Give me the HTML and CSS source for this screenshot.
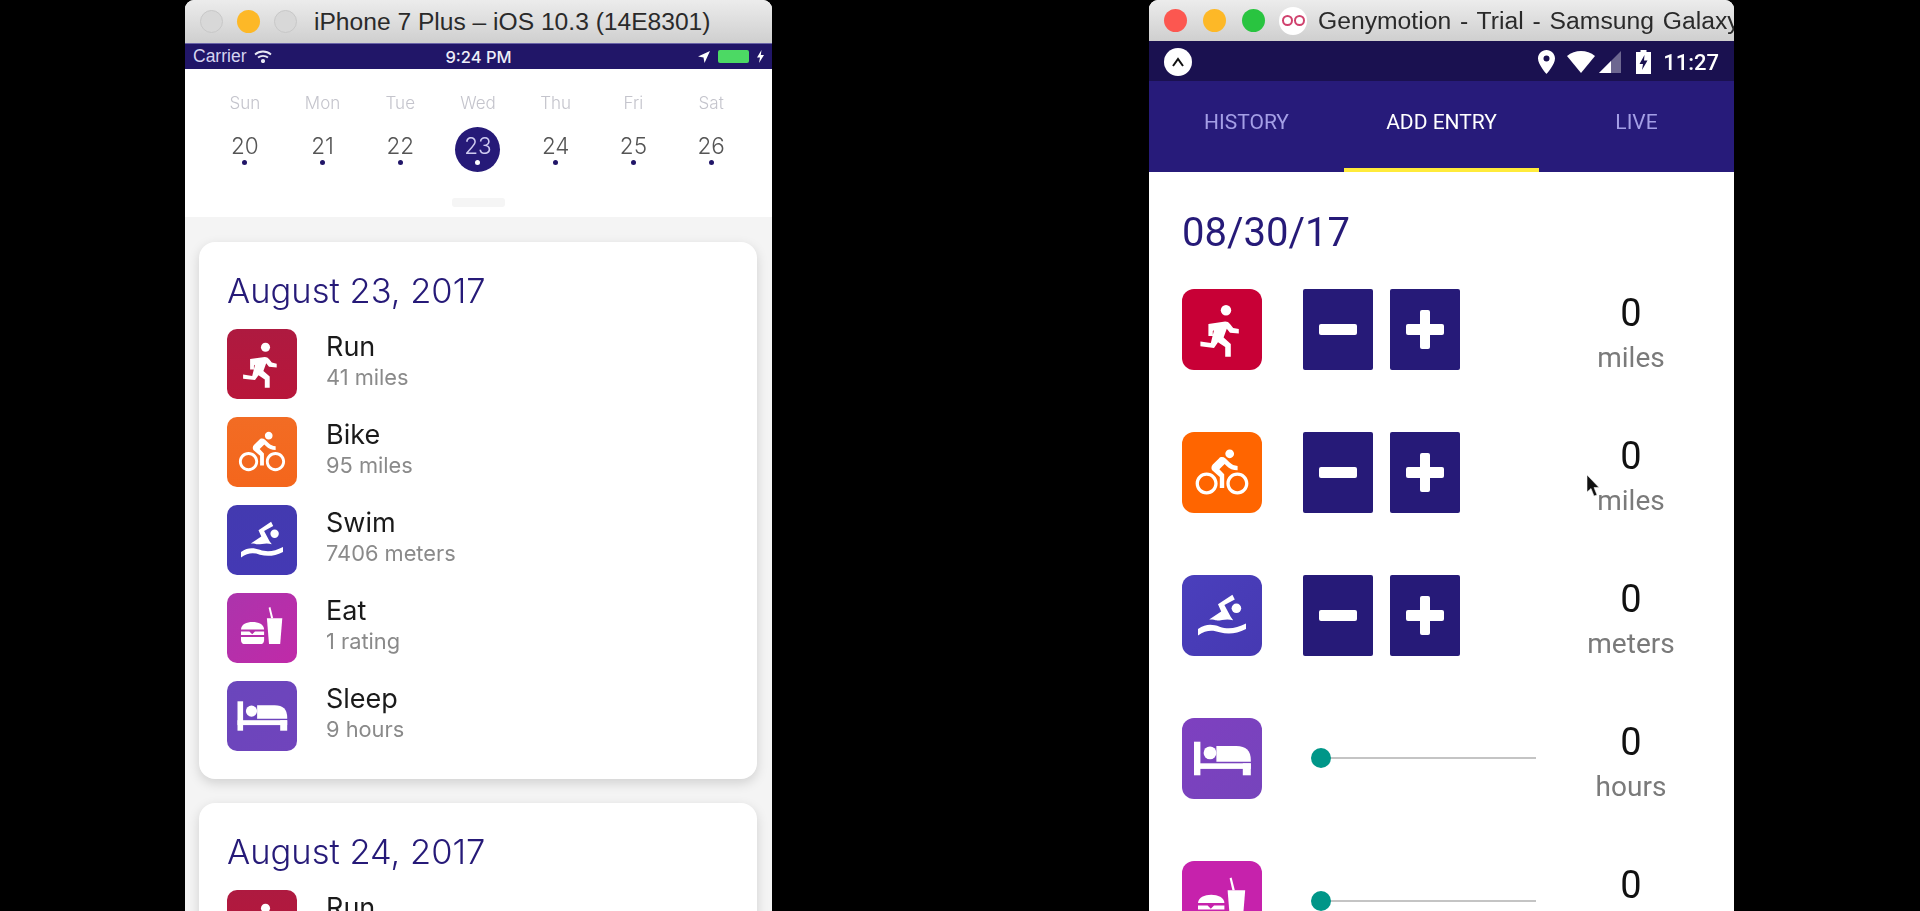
FILE: index.html
```html
<!DOCTYPE html>
<html lang="en">
<head>
    <meta charset="UTF-8">
    <meta name="viewport" content="width=device-width, initial-scale=1.0">
    <title>iOS and Android simulators</title>
    <link rel="stylesheet" href="styles.css">
</head>
<body>
    <svg class="sprite" aria-hidden="true">
        <symbol id="i-run" viewBox="0 0 100 100">
            <circle cx="55" cy="26" r="6.500"/>
            <path d="M33 43L54 40Q58 40 60 43L64 48L71 49.500V55L60 54L56 49L52 60L61 68V84H54V72L45 66L40 73L23 71V65L36 67L40 51L38.500 52V58H33Z"/>
        </symbol>
        <symbol id="i-bike" viewBox="-6.2 -6.2 36.4 36.4">
            <path d="M15.5 5.5c1.1 0 2-.9 2-2s-.9-2-2-2-2 .9-2 2 .9 2 2 2zM5 12c-2.8 0-5 2.2-5 5s2.2 5 5 5 5-2.2 5-5-2.2-5-5-5zm0 8.5c-1.9 0-3.5-1.6-3.5-3.5s1.6-3.5 3.5-3.5 3.5 1.6 3.5 3.5-1.6 3.5-3.5 3.5zm5.8-10l2.4-2.4.8.8c1.3 1.3 3 2.1 5.1 2.1V9c-1.5 0-2.7-.6-3.6-1.5l-1.9-1.9c-.5-.4-1-.6-1.6-.6s-1.1.2-1.4.6L7.8 8.4c-.4.4-.6.9-.6 1.4 0 .6.2 1.1.6 1.4L11 14v5h2v-6.2l-2.2-2.3zM19 12c-2.8 0-5 2.2-5 5s2.2 5 5 5 5-2.2 5-5-2.2-5-5-5zm0 8.5c-1.9 0-3.5-1.6-3.5-3.5s1.6-3.5 3.5-3.5 3.5 1.6 3.5 3.5-1.6 3.5-3.5 3.5z"/>
        </symbol>
        <symbol id="i-swim" viewBox="0 0 100 100">
            <circle cx="68" cy="41" r="6"/>
            <path d="M63 24L66 30L53 37L61 52L64 56C55 53 48 57 42 56C39 55 37 55 34 55L49 45L45 36Z"/>
            <path d="M20 67C30 60 38 61 47 64C58 68 68 66 80 60V67C68 73 58 74 47 71C38 68 30 68 20 75Z"/>
        </symbol>
        <symbol id="i-eat" viewBox="0 0 100 100">
            <path d="M57 36H79L76 73H60Z"/>
            <path d="M59.500 21L62 20L66 36H63Z"/>
            <path d="M20 52C20 38 53 38 53 52Z"/>
            <path d="M20 55H32L36 59L40 55H53V60H20Z"/>
            <path d="M20 63H53V67C53 71 51 73 47 73H26C22 73 20 71 20 67Z"/>
        </symbol>
        <symbol id="i-sleep" viewBox="0 0 100 100">
            <rect x="15" y="29" width="8" height="42"/>
            <rect x="15" y="56" width="71" height="7"/>
            <rect x="76" y="56" width="10" height="15"/>
            <path d="M43 34.500H68Q86 34.500 86 52V54H43Z"/>
            <circle cx="35" cy="43" r="8"/>
        </symbol>
    </svg>

    <div class="desktop">
        <!-- iOS simulator -->
        <section class="window ios">
            <div class="titlebar">
                <span class="light off"></span>
                <span class="light yellow"></span>
                <span class="light off"></span>
                <span class="window-name">iPhone 7 Plus – iOS 10.3 (14E8301)</span>
            </div>

            <div class="ios-status">
                <div class="ios-status-left">
                    <span>Carrier</span>
                    <svg class="ios-wifi" viewBox="0 0 18 13" fill="none" stroke="#e8e8f4" stroke-width="1.800">
                        <path d="M1 4.500C5.500 .5 12.500 .5 17 4.500"/>
                        <path d="M4 7.500C6.800 5.200 11.200 5.200 14 7.500"/>
                        <circle cx="9" cy="11" r="1.200" fill="#e8e8f4"/>
                    </svg>
                </div>
                <span class="ios-time">9:24 PM</span>
                <div class="ios-status-right">
                    <svg class="ios-arrow" viewBox="0 0 12 12"><path d="M12 0L0 5.500L5.500 6.500L6.500 12Z" fill="#fff"/></svg>
                    <span class="ios-battery"></span>
                    <svg class="ios-bolt" viewBox="0 0 7 13"><path d="M4.500 0L0 7.500H3L2 13L7 5H3.800Z" fill="#fff"/></svg>
                </div>
            </div>

            <div class="calendar">
                <div class="week">
                    <div class="day"><span class="day-name">Sun</span><span class="day-num">20</span></div>
                    <div class="day"><span class="day-name">Mon</span><span class="day-num">21</span></div>
                    <div class="day"><span class="day-name">Tue</span><span class="day-num">22</span></div>
                    <div class="day selected"><span class="day-name">Wed</span><span class="day-num">23</span></div>
                    <div class="day"><span class="day-name">Thu</span><span class="day-num">24</span></div>
                    <div class="day"><span class="day-name">Fri</span><span class="day-num">25</span></div>
                    <div class="day"><span class="day-name">Sat</span><span class="day-num">26</span></div>
                </div>
                <div class="handle"></div>
            </div>

            <div class="agenda">
                <div class="card">
                    <h2>August 23, 2017</h2>
                    <div class="entry">
                        <div class="tile run"><svg><use href="#i-run"/></svg></div>
                        <div class="entry-text"><div class="entry-name">Run</div><div class="entry-value">41 miles</div></div>
                    </div>
                    <div class="entry">
                        <div class="tile bike"><svg><use href="#i-bike"/></svg></div>
                        <div class="entry-text"><div class="entry-name">Bike</div><div class="entry-value">95 miles</div></div>
                    </div>
                    <div class="entry">
                        <div class="tile swim"><svg><use href="#i-swim"/></svg></div>
                        <div class="entry-text"><div class="entry-name">Swim</div><div class="entry-value">7406 meters</div></div>
                    </div>
                    <div class="entry">
                        <div class="tile eat"><svg><use href="#i-eat"/></svg></div>
                        <div class="entry-text"><div class="entry-name">Eat</div><div class="entry-value">1 rating</div></div>
                    </div>
                    <div class="entry">
                        <div class="tile sleep"><svg><use href="#i-sleep"/></svg></div>
                        <div class="entry-text"><div class="entry-name">Sleep</div><div class="entry-value">9 hours</div></div>
                    </div>
                </div>
                <div class="card">
                    <h2>August 24, 2017</h2>
                    <div class="entry">
                        <div class="tile run"><svg><use href="#i-run"/></svg></div>
                        <div class="entry-text"><div class="entry-name">Run</div><div class="entry-value"></div></div>
                    </div>
                </div>
            </div>
        </section>

        <!-- Android emulator -->
        <section class="window android">
            <div class="titlebar">
                <span class="light red"></span>
                <span class="light yellow"></span>
                <span class="light green"></span>
                <span class="geny-logo"><i></i><i></i></span>
                <span class="window-name">Genymotion - Trial - Samsung Galaxy</span>
            </div>

            <div class="android-status">
                <span class="expo-logo"><svg viewBox="0 0 14 10"><path d="M2 9L7 2L12 9" fill="none" stroke="#111" stroke-width="2"/></svg></span>
                <div class="android-status-right">
                    <svg class="st-pin" viewBox="0 0 17 24"><path fill-rule="evenodd" d="M8.500 0C3.800 0 0 3.800 0 8.500C0 14.500 8.500 24 8.500 24S17 14.500 17 8.500C17 3.800 13.200 0 8.500 0ZM8.500 11.500A3 3 0 1 1 8.500 5.500A3 3 0 0 1 8.500 11.500Z" fill="#fff"/></svg>
                    <svg class="st-wifi" viewBox="0 0 28 22"><path d="M14 22L0 5C8 -1.600 20 -1.600 28 5Z" fill="#fff"/></svg>
                    <svg class="st-signal" viewBox="0 0 22 22"><path d="M22 0V22H0Z" fill="#6d6790"/><path d="M12 10V22H0Z" fill="#fff"/></svg>
                    <svg class="st-battery" viewBox="0 0 15 24"><path d="M4.500 0H10.500V2H15V24H0V2H4.500Z" fill="#fff"/><path d="M8.500 5L3.500 14H7L6 20L11.500 10.500H8Z" fill="#1a1150"/></svg>
                    <span class="android-time">11:27</span>
                </div>
            </div>

            <nav class="tabs">
                <div class="tab">HISTORY</div>
                <div class="tab active">ADD ENTRY</div>
                <div class="tab">LIVE</div>
            </nav>

            <div class="form">
                <h1>08/30/17</h1>

                <div class="form-row">
                    <div class="tile run"><svg><use href="#i-run"/></svg></div>
                    <div class="controls">
                        <button class="step minus"></button>
                        <button class="step plus"></button>
                    </div>
                    <div class="reading"><div class="reading-num">0</div><div class="reading-unit">miles</div></div>
                </div>
                <div class="form-row">
                    <div class="tile bike"><svg><use href="#i-bike"/></svg></div>
                    <div class="controls">
                        <button class="step minus"></button>
                        <button class="step plus"></button>
                    </div>
                    <div class="reading"><div class="reading-num">0</div><div class="reading-unit">miles</div></div>
                </div>
                <div class="form-row">
                    <div class="tile swim"><svg><use href="#i-swim"/></svg></div>
                    <div class="controls">
                        <button class="step minus"></button>
                        <button class="step plus"></button>
                    </div>
                    <div class="reading"><div class="reading-num">0</div><div class="reading-unit">meters</div></div>
                </div>
                <div class="form-row">
                    <div class="tile sleep"><svg><use href="#i-sleep"/></svg></div>
                    <div class="controls slider-box">
                        <div class="slider"><span class="thumb"></span></div>
                    </div>
                    <div class="reading"><div class="reading-num">0</div><div class="reading-unit">hours</div></div>
                </div>
                <div class="form-row">
                    <div class="tile eat"><svg><use href="#i-eat"/></svg></div>
                    <div class="controls slider-box">
                        <div class="slider"><span class="thumb"></span></div>
                    </div>
                    <div class="reading"><div class="reading-num">0</div><div class="reading-unit"></div></div>
                </div>

                <svg class="cursor" viewBox="0 0 14 22"><path d="M0 0L0 17L4 13.500L7 21L10 20L7 12.500L12 12.500Z" fill="#111" stroke="#eee" stroke-width=".6"/></svg>
            </div>
        </section>
    </div>
</body>
</html>
```

FILE: styles.css
```css
* {
    box-sizing: border-box;
}

body {
    margin: 0;
    background-color: #000;
    font-family: "Liberation Sans", Arial, sans-serif;
    overflow: hidden;
}

.sprite {
    display: none;
}

.desktop {
    display: flex;
    height: 911px;
    padding-left: 185px;
    gap: 377px;
    overflow: hidden;
}

.window {
    display: flex;
    flex-direction: column;
    flex: none;
    height: 911px;
    overflow: hidden;
    background-color: #fff;
    border-radius: 9px 9px 0 0;
    filter: blur(0.4px);
}

.ios {
    width: 587px;
}

.android {
    width: 585px;
}

/* Barres de titre */
.titlebar {
    display: flex;
    align-items: center;
    flex: none;
    height: 41px;
    padding-left: 15px;
    gap: 16px;
    background: linear-gradient(#ececec, #cfcfcf);
    white-space: nowrap;
    overflow: hidden;
}

.ios .titlebar {
    height: 43px;
    gap: 14px;
}

.light {
    flex: none;
    width: 23px;
    height: 23px;
    border-radius: 50%;
}

.light.off {
    background-color: #d8d8d8;
    border: 1px solid #c8c8c8;
}

.light.yellow {
    background-color: #fdb827;
}

.light.red {
    background-color: #fc5750;
}

.light.green {
    background-color: #29c440;
}

.window-name {
    font-size: 24.7px;
    word-spacing: 2px;
    color: #2a2a2a;
}

.ios .window-name {
    margin-left: 3px;
    font-size: 24.6px;
    word-spacing: 0;
}

/* iOS */
.ios-status {
    display: flex;
    align-items: center;
    flex: none;
    height: 26px;
    padding: 0 8px 0 8px;
    background-color: #211668;
    border-top: 1px solid #6a64a8;
    color: #d6d4f0;
    font-size: 17.5px;
}

.ios-status-left,
.ios-status-right {
    display: flex;
    flex: 1;
    align-items: center;
}

.ios-status-left {
    gap: 8px;
}

.ios-wifi {
    width: 18px;
    height: 13px;
}

.ios-time {
    font-family: Inter, sans-serif;
    font-size: 16.5px;
    font-weight: 500;
    color: #eeeef8;
}

.ios-status-right {
    justify-content: flex-end;
    gap: 8px;
}

.ios-arrow {
    width: 12px;
    height: 12px;
}

.ios-battery {
    width: 31px;
    height: 13px;
    background-color: #4cd964;
    border-radius: 2px;
}

.ios-bolt {
    width: 7px;
    height: 13px;
}

.calendar {
    flex: none;
    height: 148px;
    padding: 23px 22px 0 21px;
    font-family: Inter, sans-serif;
}

.week {
    display: grid;
    grid-template-columns: repeat(7, 1fr);
}

.day {
    display: flex;
    flex-direction: column;
    align-items: center;
}

.day-name {
    height: 22px;
    line-height: 22px;
    font-size: 17px;
    font-weight: 300;
    color: #c4c4cc;
}

.day-num {
    display: flex;
    justify-content: center;
    position: relative;
    width: 45px;
    height: 45px;
    margin-top: 13px;
    padding-top: 3px;
    border-radius: 50%;
    font-size: 22.5px;
    line-height: 32px;
    font-weight: 300;
    color: #555;
}

/* point sous la date */
.day-num::after {
    content: "";
    position: absolute;
    left: 20px;
    top: 33px;
    width: 5px;
    height: 5px;
    border-radius: 50%;
    background-color: #211668;
}

.day.selected .day-num {
    background-color: #261a78;
    color: #cfcbf0;
}

.day.selected .day-num::after {
    background-color: #fff;
}

.handle {
    width: 53px;
    height: 9px;
    margin: 26px auto 0;
    background-color: #f5f5f5;
    border-radius: 3px;
}

.agenda {
    flex: 1;
    padding: 25px 15px 0 14px;
    background-color: #f4f4f4;
}

.card {
    height: 537px;
    margin-bottom: 24px;
    padding: 29px 28px;
    background-color: #fff;
    border-radius: 16px;
    box-shadow: 0 4px 12px rgba(0, 0, 0, 0.15);
    font-family: Inter, sans-serif;
}

.card h2 {
    margin: 0 0 18px;
    height: 40px;
    line-height: 40px;
    font-size: 34.5px;
    font-weight: 300;
    color: #261a78;
}

.entry {
    display: flex;
    align-items: center;
    gap: 29px;
    margin-bottom: 18px;
}

.entry-text {
    padding-bottom: 5px;
}

.entry-name {
    font-size: 27px;
    line-height: 30px;
    color: #1a1a1a;
}

.entry-value {
    min-height: 30px;
    font-size: 21.8px;
    line-height: 30px;
    color: #8a8a8a;
}

/* Icônes */
.tile {
    flex: none;
    width: 70px;
    height: 70px;
    border-radius: 10px;
    fill: #fff;
}

.tile svg {
    display: block;
    width: 100%;
    height: 100%;
}

.tile.run {
    background: linear-gradient(#ae1a40, #b8163a);
}

.tile.bike {
    background: linear-gradient(#f26c24, #f4661c);
}

.tile.swim {
    background: linear-gradient(#433ab0, #4439b4);
}

.tile.eat {
    background: linear-gradient(135deg, #ac34ac, #c02aa8);
}

.tile.sleep {
    background: linear-gradient(135deg, #6a46bc, #7044bc);
}

.android .tile {
    width: 80px;
    height: 81px;
    border-radius: 12px;
}

.android .tile.run {
    background: #c80036;
}

.android .tile.bike {
    background: #ff6500;
}

.android .tile.swim {
    background: linear-gradient(135deg, #4a3fbc, #4639b2);
}

.android .tile.sleep {
    background: linear-gradient(135deg, #7e40c0, #7644bc);
}

.android .tile.eat {
    background: #c622ac;
}

/* Android */
.android-status {
    display: flex;
    align-items: center;
    justify-content: space-between;
    flex: none;
    height: 40px;
    padding: 2px 15px 0 15px;
    background-color: #1a1150;
}

.expo-logo {
    display: flex;
    align-items: center;
    justify-content: center;
    width: 28px;
    height: 28px;
    border-radius: 50%;
    background-color: #fff;
}

.expo-logo svg {
    width: 14px;
    height: 10px;
}

.android-status-right {
    display: flex;
    align-items: center;
    color: #fff;
}

.st-pin {
    width: 17px;
    height: 24px;
    margin-right: 12px;
}

.st-wifi {
    width: 28px;
    height: 22px;
    margin-right: 4px;
}

.st-signal {
    width: 22px;
    height: 22px;
    margin-right: 15px;
}

.st-battery {
    width: 15px;
    height: 24px;
    margin-right: 12px;
}

.android-time {
    font-family: Roboto, sans-serif;
    font-size: 22px;
    font-weight: 500;
}

.geny-logo {
    display: flex;
    align-items: center;
    justify-content: center;
    flex: none;
    gap: 1px;
    width: 28px;
    height: 28px;
    margin-left: -2px;
    margin-right: -5px;
    border-radius: 50%;
    background-color: #fff;
}

.geny-logo i {
    width: 11px;
    height: 11px;
    border: 2px solid #d0426e;
    border-radius: 50%;
}

.tabs {
    display: grid;
    grid-template-columns: repeat(3, 1fr);
    flex: none;
    height: 91px;
    background-color: #271b7a;
    font-family: Roboto, sans-serif;
}

.tab {
    padding-top: 29px;
    text-align: center;
    font-size: 21px;
    line-height: 24px;
    color: #a49fe6;
}

.tab.active {
    color: #fff;
    border-bottom: 4px solid #ffeb3b;
}

.form {
    flex: 1;
    position: relative;
    padding: 0 8px 0 33px;
    font-family: Roboto, sans-serif;
}

.form h1 {
    margin: 37px 0 0;
    height: 48px;
    line-height: 48px;
    font-size: 40px;
    font-weight: 400;
    color: #261a78;
}

.form-row {
    display: flex;
    align-items: center;
    height: 81px;
    margin-top: 32px;
    margin-bottom: 62px;
}

.form-row + .form-row {
    margin-top: 0;
}

.controls {
    display: flex;
    flex: none;
    gap: 17px;
    width: 233px;
    margin-left: 41px;
}

.step {
    position: relative;
    width: 70px;
    height: 81px;
    padding: 0;
    border: none;
    border-radius: 2px;
    background-color: #261a78;
}

.step::before,
.plus::after {
    content: "";
    position: absolute;
    left: 16px;
    top: 35px;
    width: 38px;
    height: 11px;
    border-radius: 2px;
    background-color: #fff;
}

.plus::after {
    left: 30px;
    top: 21px;
    width: 10px;
    height: 39px;
}

.slider-box {
    height: 20px;
    margin-top: -2px;
    align-items: center;
}

.slider {
    position: relative;
    width: 216px;
    height: 2px;
    margin-left: 17px;
    background-color: #c4c4c4;
}

.thumb {
    position: absolute;
    left: -9px;
    top: -9px;
    width: 20px;
    height: 20px;
    border-radius: 50%;
    background-color: #009688;
}

.reading {
    flex: 1;
    margin-top: 10px;
    text-align: center;
}

.reading-num {
    font-size: 38px;
    line-height: 46px;
    color: #111;
}

.reading-unit {
    min-height: 44px;
    font-size: 28px;
    line-height: 44px;
    color: #7a7a7a;
}

.cursor {
    position: absolute;
    left: 438px;
    top: 303px;
    width: 14px;
    height: 22px;
}
```
